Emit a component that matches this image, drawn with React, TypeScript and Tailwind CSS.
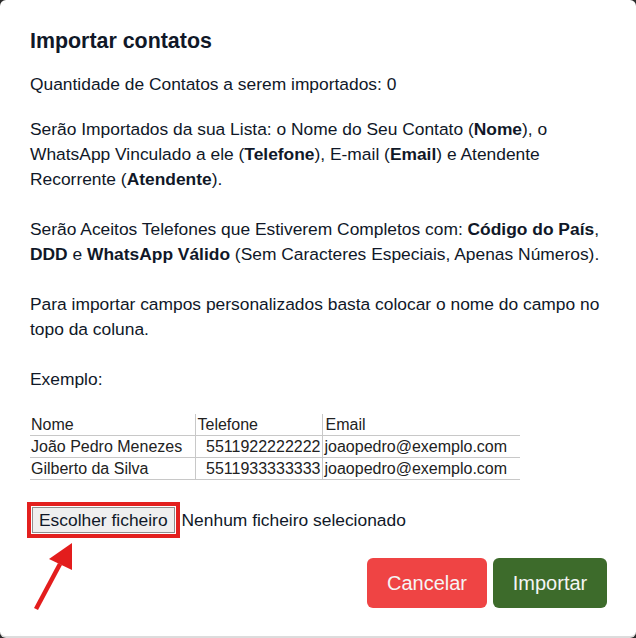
import React from 'react'

const rows = [
    { nome: 'João Pedro Menezes', telefone: '5511922222222', email: 'joaopedro@exemplo.com' },
    { nome: 'Gilberto da Silva', telefone: '5511933333333', email: 'joaopedro@exemplo.com' },
]

export default function App() {
    return (
        <div className="h-[638px] w-[636px] bg-[#2a2a2a] font-['Liberation_Sans',Arial,sans-serif]">
            <div className="relative h-[638px] rounded-[6px] border-b-2 border-[#dcdcdc] bg-white pl-[30px] pr-[29px] pt-[27px] text-gray-900">
                {/* Title */}
                <h2 className="text-[21.4px] font-bold leading-[28px]">Importar contatos</h2>

                <p className="mt-[17px] text-[17.4px] leading-[25px]">
                    Quantidade de Contatos a serem importados: 0
                </p>

                {/* Instructions */}
                <div className="mt-[20px] text-[17.4px] leading-[25px]">
                    Serão Importados da sua Lista: o Nome do Seu Contato (<b>Nome</b>), o WhatsApp Vinculado a ele (<b>Telefone</b>), E-mail (<b>Email</b>) e Atendente Recorrente (<b>Atendente</b>).
                    <br />
                    <br />
                    Serão Aceitos Telefones que Estiverem Completos com: <b>Código do País</b>, <b>DDD</b> e <b>WhatsApp Válido</b> (Sem Caracteres Especiais, Apenas Números).
                    <br />
                    <br />
                    Para importar campos personalizados basta colocar o nome do campo no topo da coluna.
                    <br />
                    <br />
                    Exemplo:
                </div>

                {/* Example sheet */}
                <table className="mt-[22px] w-[490px] border-collapse text-base leading-[21px] text-[#222]">
                    <thead>
                        <tr className="border-b border-[#c8c8c8]">
                            <th className="w-[165px] border-r border-[#c8c8c8] px-[1px] text-left font-normal">Nome</th>
                            <th className="w-[127px] border-r border-[#c8c8c8] px-[2px] text-left font-normal">Telefone</th>
                            <th className="px-[3px] text-left font-normal">Email</th>
                        </tr>
                    </thead>
                    <tbody>
                        {rows.map((r) => (
                            <tr key={r.telefone} className="border-b border-[#c8c8c8]">
                                <td className="border-r border-[#c8c8c8] px-[1px]">{r.nome}</td>
                                <td className="border-r border-[#c8c8c8] px-[1px] text-right">{r.telefone}</td>
                                <td className="px-[2px]">{r.email}</td>
                            </tr>
                        ))}
                    </tbody>
                </table>

                {/* File input */}
                <div className="mt-[22px] flex items-center text-[17.4px]">
                    <div className="-ml-[3px] border-[4px] border-[#e3201f] p-[1px]">
                        <div className="border border-[#8f8f8f] bg-[#efefef] px-[6px] py-[2px] leading-[20px]">
                            Escolher ficheiro
                        </div>
                    </div>
                    <span className="ml-[2px]">Nenhum ficheiro selecionado</span>
                </div>

                {/* Actions */}
                <div className="mt-[20px] flex justify-end gap-[6px]">
                    <button className="h-[50px] w-[120px] rounded-[6px] bg-[#ef4444] text-[20px] text-[#f5f5f5]">
                        Cancelar
                    </button>
                    <button className="h-[50px] w-[114px] rounded-[6px] bg-[#3d6b2b] text-[20px] text-[#f5f5f5]">
                        Importar
                    </button>
                </div>

                {/* Annotation arrow */}
                <svg className="absolute left-[30px] top-[540px]" width="50" height="75" viewBox="0 0 50 75">
                    <line x1="6" y1="69" x2="30" y2="24" stroke="#e31d1d" strokeWidth="4.5" />
                    <polygon points="42,3 19,19 42,30" fill="#e31d1d" />
                </svg>
            </div>
        </div>
    )
}
